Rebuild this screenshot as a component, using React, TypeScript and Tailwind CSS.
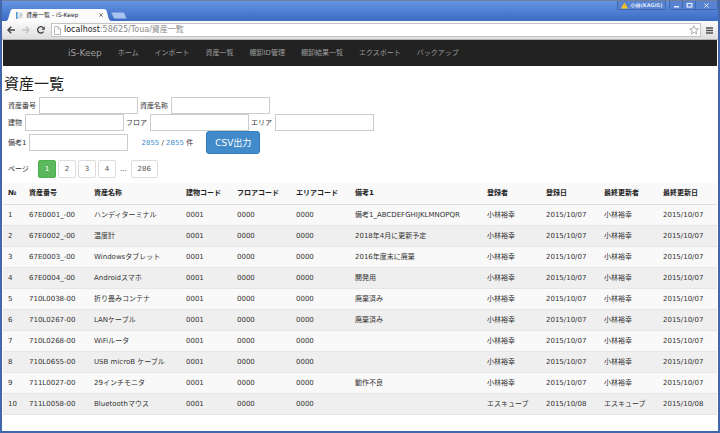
import React from "react";

const navItems = ["ホーム", "インポート", "資産一覧", "棚卸ID管理", "棚卸結果一覧", "エクスポート", "バックアップ"];

const headers = [
  "№", "資産番号", "資産名称", "建物コード", "フロアコード", "エリアコード",
  "備考1", "登録者", "登録日", "最終更新者", "最終更新日",
];

const columnWidths = [
  "w-[21px]", "w-[65px]", "w-[92px]", "w-[51px]", "w-[59px]", "w-[59px]",
  "w-[132px]", "w-[59px]", "w-[58px]", "w-[59px]", "w-auto",
];

type Asset = { code: string; name: string; note: string; user: string; date: string };

const assets: Asset[] = [
  { code: "67E0001_-00", name: "ハンディターミナル", note: "備考1_ABCDEFGHIJKLMNOPQR", user: "小林裕幸", date: "2015/10/07" },
  { code: "67E0002_-00", name: "温度計", note: "2018年4月に更新予定", user: "小林裕幸", date: "2015/10/07" },
  { code: "67E0003_-00", name: "Windowsタブレット", note: "2016年度末に廃棄", user: "小林裕幸", date: "2015/10/07" },
  { code: "67E0004_-00", name: "Androidスマホ", note: "開発用", user: "小林裕幸", date: "2015/10/07" },
  { code: "710L0038-00", name: "折り畳みコンテナ", note: "廃棄済み", user: "小林裕幸", date: "2015/10/07" },
  { code: "710L0267-00", name: "LANケーブル", note: "廃棄済み", user: "小林裕幸", date: "2015/10/07" },
  { code: "710L0268-00", name: "WiFiルータ", note: "", user: "小林裕幸", date: "2015/10/07" },
  { code: "710L0655-00", name: "USB microB ケーブル", note: "", user: "小林裕幸", date: "2015/10/07" },
  { code: "711L0027-00", name: "29インチモニタ", note: "動作不良", user: "小林裕幸", date: "2015/10/07" },
  { code: "711L0058-00", name: "Bluetoothマウス", note: "", user: "エスキューブ", date: "2015/10/08" },
];

function TitleBar() {
  return (
    <header className="flex h-[21px] items-end justify-between border-t border-[#6f7f9c] bg-linear-to-b from-[#6494e2] to-[#3c6bc4] pl-1">
      <div className="flex items-end">
        <div className="relative flex h-3 w-[105px] items-center pl-2.5">
          <svg className="absolute inset-0 h-full w-full" viewBox="0 0 105 12" preserveAspectRatio="none" aria-hidden="true">
            <path d="M0 12 C2 11.5 2 10 3 7 L4.500 2 Q5 0 7 0 H98 Q100 0 100.700 2 L102.500 9 Q103.300 12 105 12 Z" fill="#fcfcfd" />
          </svg>
          <svg className="relative h-[7px] w-[7px]" viewBox="0 0 7 7" aria-hidden="true">
            <rect width="7" height="7" fill="#e3e8ec" />
            <rect width="1.500" height="7" fill="#4d9bd0" />
            <path d="M3 5.500 L5 2 L6 4" stroke="#b9c2c8" fill="none" />
          </svg>
          <span className="relative ml-[3px] flex-1 whitespace-nowrap text-[6px] leading-[8px] text-[#222]">資産一覧 - iS-Keep</span>
          <button type="button" aria-label="閉じる" className="relative mr-2">
            <svg className="h-1 w-1" viewBox="0 0 4 4" aria-hidden="true">
              <path d="M0.300 0.300 L3.700 3.700 M3.700 0.300 L0.300 3.700" stroke="#555" strokeWidth="0.800" />
            </svg>
          </button>
        </div>
        <button type="button" aria-label="新しいタブ" className="mb-0.5">
          <svg className="h-[7px] w-4" viewBox="0 0 16 7" aria-hidden="true">
            <path d="M1.500 0.500 H12 Q13 0.500 13.500 1.500 L15.300 6.500 H4 Q3 6.500 2.600 5.500 L0.700 1.500 Q0.500 0.500 1.500 0.500 Z" fill="#a9c4f0" stroke="#7f9fd9" strokeWidth="0.600" />
          </svg>
        </button>
      </div>
      <div className="flex h-[9px] gap-[3px] self-start text-[#dce7fa]">
        <button type="button" className="flex w-[49px] items-center justify-center gap-[3px] rounded-b-xs border border-t-0 border-[#3f67b0] bg-[#5783d0] text-[5px] leading-[6px] font-bold whitespace-nowrap">
          <svg className="h-[7px] w-[7px] shrink-0" viewBox="0 0 7 7" aria-hidden="true">
            <path d="M3.500 0.500 L7 6.500 H0 Z" fill="#fbc61d" />
            <path d="M3.500 2.500 V5" stroke="#d9a416" strokeWidth="0.700" />
          </svg>
          小林(KAGIS)
        </button>
        <div className="flex divide-x divide-[#3f67b0] rounded-b-xs border border-t-0 border-[#3f67b0] bg-[#5783d0]">
          <button type="button" aria-label="最小化" className="flex w-[13px] items-center justify-center">
            <svg className="h-[7px] w-[7px]" viewBox="0 0 7 7" aria-hidden="true"><rect x="1" y="4" width="5" height="1.500" fill="#e8effc" /></svg>
          </button>
          <button type="button" aria-label="最大化" className="flex w-[13px] items-center justify-center">
            <svg className="h-[7px] w-[7px]" viewBox="0 0 7 7" aria-hidden="true"><rect x="1.200" y="1.500" width="4.600" height="3.500" fill="none" stroke="#e8effc" strokeWidth="1.200" /></svg>
          </button>
          <button type="button" aria-label="ウィンドウを閉じる" className="flex w-[21px] items-center justify-center">
            <svg className="h-[7px] w-[7px]" viewBox="0 0 7 7" aria-hidden="true"><path d="M1.500 1.500 L5.500 5.500 M5.500 1.500 L1.500 5.500" stroke="#e8effc" strokeWidth="1" /></svg>
          </button>
        </div>
      </div>
    </header>
  );
}

function AddressBar() {
  return (
    <div className="flex h-[19px] items-center border-b border-[#b4b4b4] bg-linear-to-b from-[#fbfbfb] to-[#dedede] pl-[5px]">
      <div className="flex gap-[7px]">
        <button type="button" aria-label="戻る">
          <svg className="h-2 w-2" viewBox="0 0 8 8" aria-hidden="true"><path d="M8 4 H1 M4.200 0.800 L1 4 L4.200 7.200" fill="none" stroke="#484848" strokeWidth="1.500" /></svg>
        </button>
        <button type="button" aria-label="進む">
          <svg className="h-2 w-2" viewBox="0 0 8 8" aria-hidden="true"><path d="M0 4 H7 M3.800 0.800 L7 4 L3.800 7.200" fill="none" stroke="#c2c2c2" strokeWidth="1.500" /></svg>
        </button>
        <button type="button" aria-label="再読み込み">
          <svg className="h-2 w-2" viewBox="0 0 8 8" aria-hidden="true">
            <path d="M6.600 5.500 A3.200 3.200 0 1 1 6.300 1.800" fill="none" stroke="#484848" strokeWidth="1.400" />
            <path d="M7.800 0.200 V3.700 H4.300 Z" fill="#484848" />
          </svg>
        </button>
      </div>
      <div className="ml-1.5 flex h-[14px] flex-1 items-center border border-[#c3c3c3] bg-white pl-0.5">
        <svg className="h-[9px] w-[7px]" viewBox="0 0 7 9" aria-hidden="true">
          <path d="M0.500 0.500 H4 L6.500 3 V8.500 H0.500 Z M4 0.500 V3 H6.500" fill="none" stroke="#aaa" strokeWidth="0.800" />
        </svg>
        <div role="textbox" aria-label="アドレス" className="ml-[3px] flex-1 text-[8px] leading-[12px] whitespace-nowrap text-[#8a8a8a]">
          <span className="text-[#222]">localhost</span>:58625/Toua/資産一覧
        </div>
        <button type="button" aria-label="ブックマーク" className="mr-px">
          <svg className="h-[10px] w-[10px]" viewBox="0 0 10 10" aria-hidden="true">
            <path d="M5 0.700 L6.200 3.700 L9.400 3.900 L6.900 5.900 L7.700 9.100 L5 7.300 L2.300 9.100 L3.100 5.900 L0.600 3.900 L3.800 3.700 Z" fill="none" stroke="#999" strokeWidth="0.800" />
          </svg>
        </button>
      </div>
      <button type="button" aria-label="メニュー" className="mx-[5px]">
        <svg className="h-[7px] w-[7px]" viewBox="0 0 7 7" aria-hidden="true"><path d="M0 1 H7 M0 3.500 H7 M0 6 H7" stroke="#505050" strokeWidth="1.500" /></svg>
      </button>
    </div>
  );
}

function Field({ id, label }: { id: string; label: string }) {
  return (
    <div className="flex items-center gap-[3px]">
      <label htmlFor={id}>{label}</label>
      <input id={id} type="text" className="h-[17px] w-[99px] border border-[#ccc] bg-white px-1" />
    </div>
  );
}

function PageButton({ label, active = false }: { label: string; active?: boolean }) {
  return (
    <button
      type="button"
      className={
        active
          ? "h-[18px] min-w-[18px] rounded-xs border border-[#4cae4c] bg-[#5cb85c] px-1 text-white"
          : "h-[18px] min-w-[18px] rounded-xs border border-[#ddd] bg-white px-1 text-[#555] last:px-1.5"
      }
    >
      {label}
    </button>
  );
}

function SearchForm() {
  return (
    <form className="pl-[5px]">
      <div className="flex gap-0.5">
        <Field id="asset-code" label="資産番号" />
        <Field id="asset-name" label="資産名称" />
      </div>
      <div className="flex gap-0.5">
        <Field id="building" label="建物" />
        <Field id="floor" label="フロア" />
        <Field id="area" label="エリア" />
      </div>
      <div className="flex items-center">
        <Field id="note" label="備考1" />
        <p className="ml-[13px]">
          <span className="text-[#428bca]">2855</span> / <span className="text-[#428bca]">2855</span> 件
        </p>
        <button type="button" className="ml-[13px] h-[23px] rounded-[3px] border border-[#357ebd] bg-[#428bca] px-2 text-[9px] text-white">
          CSV出力
        </button>
      </div>
    </form>
  );
}

function AssetTable() {
  return (
    <table className="mt-[5px] w-full table-fixed border-collapse text-left">
      <colgroup>
        {columnWidths.map((width, i) => (
          <col key={i} className={width} />
        ))}
      </colgroup>
      <thead>
        <tr className="h-[21px] border-b border-[#ddd] bg-[#f9f9f9]">
          {headers.map((header) => (
            <th key={header} scope="col" className="pl-[5px] font-bold whitespace-nowrap text-[#222]">{header}</th>
          ))}
        </tr>
      </thead>
      <tbody>
        {assets.map((asset, i) => (
          <tr key={asset.code} className="h-[21px] border-b border-[#e6e6e6] odd:bg-[#f9f9f9] even:bg-[#efefef]">
            {[i + 1, asset.code, asset.name, "0001", "0000", "0000", asset.note, asset.user, asset.date, asset.user, asset.date].map((value, j) => (
              <td key={j} className="pl-[5px] whitespace-nowrap">{value}</td>
            ))}
          </tr>
        ))}
      </tbody>
    </table>
  );
}

export default function App() {
  return (
    <div lang="ja" className="flex min-h-screen flex-col border-x-2 border-b-2 border-[#4267ab] bg-white font-['DejaVu_Sans','Noto_Sans_CJK_JP',sans-serif] text-[7px] leading-[10px] text-[#333]">
      <TitleBar />
      <AddressBar />
      <nav className="mx-px flex h-[26px] items-center bg-[#222] pl-[65px] text-[#9d9d9d]">
        <a href="#home" className="mr-4 text-[9px] leading-[12px]">iS-Keep</a>
        <ul className="flex gap-4">
          {navItems.map((item) => (
            <li key={item}><a href={"#" + item} className="whitespace-nowrap">{item}</a></li>
          ))}
        </ul>
      </nav>
      <main className="px-px">
        <h1 className="mt-2 mb-[3px] pl-px text-[15px] leading-[20px] text-[#222]">資産一覧</h1>
        <SearchForm />
        <div className="mt-1.5 flex items-center gap-0.5 pl-[5px]">
          <span className="mr-[7px]">ページ</span>
          <PageButton label="1" active />
          <PageButton label="2" />
          <PageButton label="3" />
          <PageButton label="4" />
          <span className="px-0.5">...</span>
          <PageButton label="286" />
        </div>
        <AssetTable />
      </main>
    </div>
  );
}
